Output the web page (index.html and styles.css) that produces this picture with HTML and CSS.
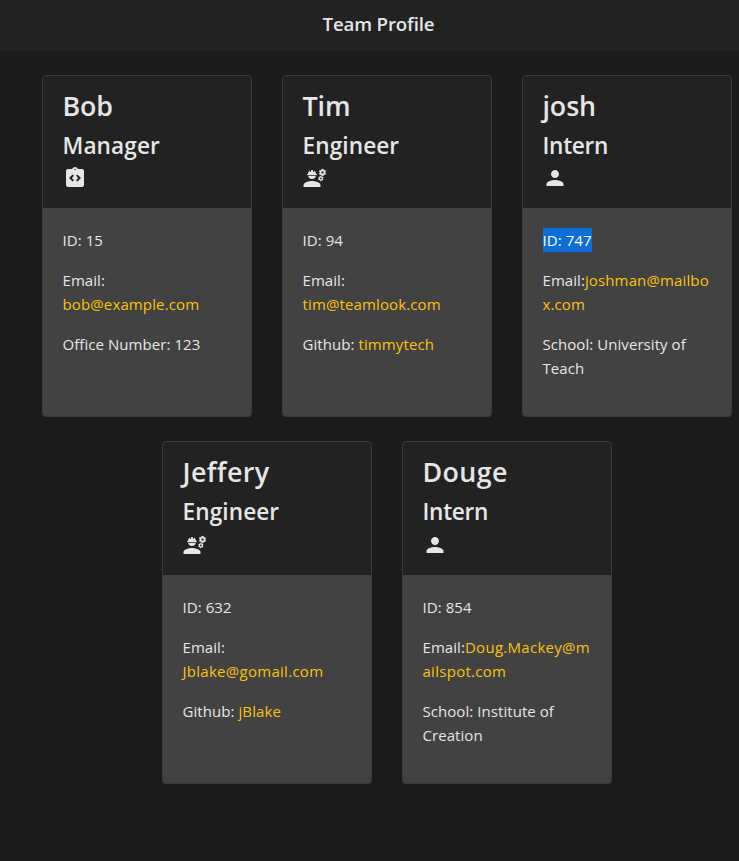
FILE: index.html
```html
<!DOCTYPE html>
<html lang="en">
<head>
<meta charset="utf-8">
<title>Team Profile</title>
<link rel="stylesheet" href="styles.css">
</head>
<body>
<svg class="defs" aria-hidden="true">
  <symbol id="manager" viewBox="0 0 24 24"><path fill-rule="evenodd" d="M19 3h-4.18C14.4 1.84 13.3 1 12 1s-2.4.84-2.82 2H5c-1.1 0-2 .9-2 2v14c0 1.1.9 2 2 2h14c1.1 0 2-.9 2-2V5c0-1.1-.9-2-2-2zM11 14.17l-1.41 1.42L6 12l3.59-3.59L11 9.83 8.83 12 11 14.17zM12 4.25c-.41 0-.75-.34-.75-.75s.34-.75.75-.75.75.34.75.75-.34.75-.75.75zM14.41 15.59L13 14.17 15.17 12 13 9.83l1.41-1.42L18 12l-3.59 3.59z"/></symbol>
  <symbol id="engineer" viewBox="0 0 24 24">
    <path d="M9 15c-2.67 0-8.5 1.34-8.5 4v2h17v-2c0-2.66-5.83-4-8.5-4z"/>
    <path d="M4.54 9.2h8.92c.27 0 .49-.22.49-.49v-.22c0-.27-.22-.49-.49-.49H13c0-1.48-.81-2.75-2-3.45v.95c0 .28-.22.5-.5.5s-.5-.22-.5-.5V4.14a4 4 0 0 0-2 0V5.5c0 .28-.22.5-.5.5S7 5.78 7 5.5v-.95C5.81 5.25 5 6.52 5 8h-.46c-.27 0-.49.22-.49.49v.22c0 .27.22.49.49.49z"/>
    <path d="M9 13c1.86 0 3.41-1.28 3.86-3H5.14c.45 1.72 2 3 3.86 3z"/>
    <g class="gears">
      <path id="gear" fill-rule="evenodd" d="M22.1 6.84c.01-.11.02-.22.02-.34 0-.12-.01-.23-.03-.34l.74-.58c.07-.05.08-.15.04-.22l-.7-1.21c-.04-.08-.14-.1-.21-.08l-.86.35c-.18-.14-.38-.25-.59-.34l-.13-.93C20.36 3.06 20.29 3 20.2 3h-1.4c-.09 0-.16.06-.17.15l-.13.93c-.21.09-.41.21-.59.34l-.87-.35c-.08-.03-.17 0-.21.08l-.7 1.21c-.04.08-.03.17.04.22l.74.58c-.02.11-.03.23-.03.34 0 .11.01.23.03.34l-.74.58c-.07.05-.08.15-.04.22l.7 1.21c.04.08.14.1.21.08l.87-.35c.18.14.38.25.59.34l.13.93c.01.09.08.15.17.15h1.4c.09 0 .16-.06.17-.15l.13-.93c.21-.09.41-.21.59-.34l.87.35c.08.03.17 0 .21-.08l.7-1.21c.04-.08.03-.17-.04-.22l-.73-.58zM19.5 7.75a1.25 1.25 0 1 1 0-2.5 1.25 1.25 0 0 1 0 2.5z"/>
      <use href="#gear" transform="translate(3.4 7.7) scale(.74)"/>
    </g>
  </symbol>
  <symbol id="intern" viewBox="0 0 24 24"><path d="M12 12c2.21 0 4-1.79 4-4s-1.79-4-4-4-4 1.79-4 4 1.79 4 4 4zm0 2c-2.67 0-8.5 1.34-8.5 4v2h17v-2c0-2.66-5.83-4-8.5-4z"/></symbol>
</svg>
<header class="navbar"><h1>Team Profile</h1></header>
<main class="team">
  <article class="card">
    <div class="card-header"><h2>Bob</h2><h3>Manager</h3><svg class="icon"><use href="#manager"/></svg></div>
    <div class="card-body">
      <p>ID: 15</p>
      <p>Email:<br><a>bob@example.com</a></p>
      <p>Office Number: 123</p>
    </div>
  </article>
  <article class="card">
    <div class="card-header"><h2>Tim</h2><h3>Engineer</h3><svg class="icon"><use href="#engineer"/></svg></div>
    <div class="card-body">
      <p>ID: 94</p>
      <p>Email:<br><a>tim@teamlook.com</a></p>
      <p>Github: <a>timmytech</a></p>
    </div>
  </article>
  <article class="card">
    <div class="card-header"><h2>josh</h2><h3 class="short">Intern</h3><svg class="icon"><use href="#intern"/></svg></div>
    <div class="card-body">
      <p><span class="selected">ID: 747</span></p>
      <p>Email:<a>joshman@mailbo<br>x.com</a></p>
      <p>School: University of<br>Teach</p>
    </div>
  </article>
  <article class="card">
    <div class="card-header"><h2 class="long">Jeffery</h2><h3>Engineer</h3><svg class="icon"><use href="#engineer"/></svg></div>
    <div class="card-body">
      <p>ID: 632</p>
      <p>Email:<br><a class="wide">Jblake@gomail.com</a></p>
      <p>Github: <a>jBlake</a></p>
    </div>
  </article>
  <article class="card">
    <div class="card-header"><h2 class="long">Douge</h2><h3 class="short">Intern</h3><svg class="icon"><use href="#intern"/></svg></div>
    <div class="card-body">
      <p>ID: 854</p>
      <p>Email:<a class="wide">Doug.Mackey@m<br>ailspot.com</a></p>
      <p>School: Institute of<br>Creation</p>
    </div>
  </article>
</main>
</body>
</html>
```
FILE: styles.css
```css
* { box-sizing: border-box; }
body {
  margin: 0;
  min-height: 861px;
  background: #1b1b1b;
  color: #e6e6e6;
  font: 15px/24px "Open Sans", "Noto Sans", sans-serif;
  letter-spacing: 0.06px;
  overflow: hidden;
}
h1, h2, h3, p { margin: 0; }
h1, h2, h3 { font-weight: 600; white-space: nowrap; }
.defs { position: absolute; width: 0; height: 0; }
.navbar {
  height: 51px;
  padding: 9px 0 0 18px;
  background: #222;
  text-align: center;
}
h1 { font-size: 18.7px; line-height: 30px; letter-spacing: -0.15px; }
.team {
  display: flex;
  flex-wrap: wrap;
  justify-content: center;
  gap: 24px 30px;
  width: 690px;
  margin: 24px 0 0 42px;
}
.card {
  width: 210px;
  height: 342.4px;
  border: 1px solid #3a3a3a;
  border-radius: 4px;
  background: #424242;
  overflow: hidden;
}
.card-header {
  height: 132.4px;
  padding: 13px 19.5px 0;
  background: #222;
}
h2 { font-size: 26.8px; line-height: 34px; letter-spacing: -0.1px; }
h2.long { letter-spacing: 0.4px; }
h3 { margin-top: 8px; font-size: 22.6px; line-height: 29px; letter-spacing: 0.1px; }
h3.short { letter-spacing: -0.3px; }
.icon {
  display: block;
  width: 24px;
  height: 24px;
  margin-top: 6.2px;
  fill: #e6e6e6;
}
.gears { stroke: #e6e6e6; stroke-width: 0.25px; }
.card-body { padding: 20px 19.5px; white-space: nowrap; }
p + p { margin-top: 16px; }
a { color: #ffc107; letter-spacing: 0.13px; }
a.wide { letter-spacing: 0.28px; }
.selected { display: inline-block; width: 49px; background: #0d6edb; color: #fff; }
```
